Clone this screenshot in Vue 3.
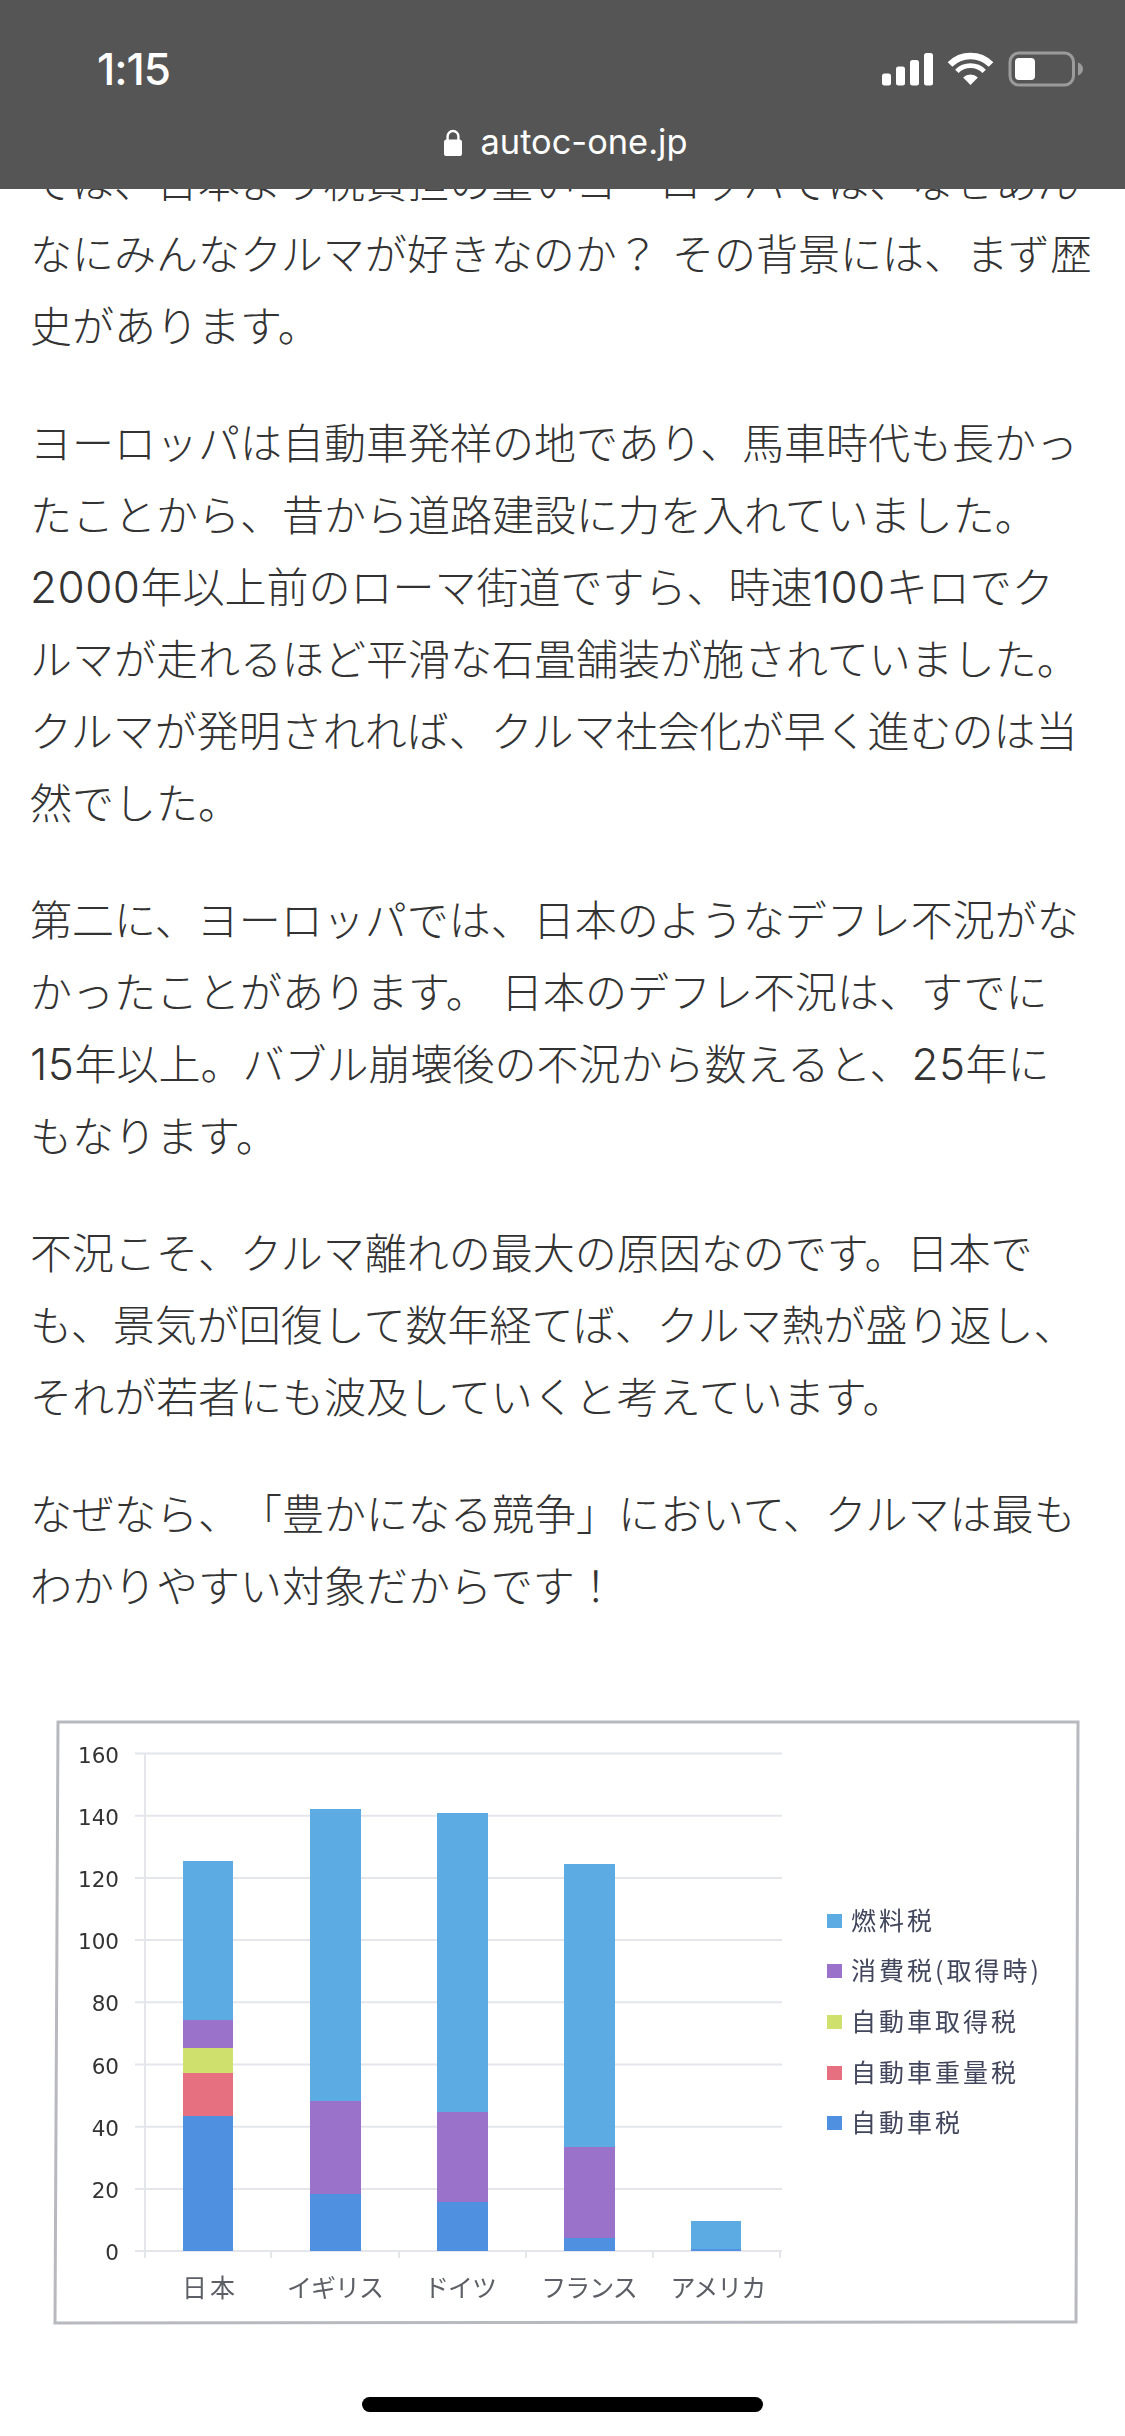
<template>
  <div class="page">
    <!-- Browser chrome, sits over the scrolled article -->
    <header class="chrome">
      <div class="status">
        <span class="time">1:15</span>
        <svg class="status-icons" width="204" height="38" viewBox="880 50 204 38">
          <rect v-for="b in signal" :key="b.x" :x="b.x" :y="b.y" width="9" :height="85.5 - b.y" rx="2.5" fill="#fff" />
          <path d="M950 64.5A29 29 0 0 1 991 64.5" fill="none" stroke="#fff" stroke-width="6.6" />
          <path d="M956.85 71.35A19.3 19.3 0 0 1 984.15 71.35" fill="none" stroke="#fff" stroke-width="4.8" />
          <path d="M970.5 85L963.1 77.6A10.5 10.5 0 0 1 977.9 77.6Z" fill="#fff" />
          <rect x="1010" y="53" width="63.5" height="32" rx="9" fill="none" stroke="#9b9b9b" stroke-width="3" />
          <rect x="1015" y="58" width="20" height="22" rx="4" fill="#fff" />
          <path d="M1078 62.5C1081 63.5 1083 66 1083 69C1083 72 1081 74.5 1078 75.5Z" fill="#9b9b9b" />
        </svg>
      </div>
      <div class="url">
        <svg width="18" height="27" viewBox="0 0 18 27">
          <path d="M3.6 11V7.4a5.4 5.4 0 0 1 10.8 0V11" fill="none" stroke="#fff" stroke-width="2.4" />
          <rect x="0" y="10.5" width="18" height="16.5" rx="2.6" fill="#fff" />
        </svg>
        <span>autoc-one.jp</span>
      </div>
    </header>

    <article class="article">
      <p v-for="(para, i) in paragraphs" :key="i" class="para">
        <span v-for="line in para" :key="line" class="line">
          <template v-for="(part, j) in splitDigits(line)" :key="j">
            <span v-if="j % 2" class="num">{{ part }}</span>
            <template v-else>{{ part }}</template>
          </template>
        </span>
      </p>
    </article>

    <figure class="figure">
      <svg width="1125" height="640" viewBox="0 1700 1125 640">
        <path d="M58 1722L1078 1722L1076 2322L55 2323Z" fill="#fff" stroke="#b8b9bf" stroke-width="3" />
        <g stroke="#e4e6ec" stroke-width="2">
          <line v-for="t in ticks" :key="t.label" x1="135" x2="782" :y1="t.y" :y2="t.y" />
          <line x1="145" x2="145" y1="1753" y2="2258" />
          <line v-for="x in [271, 399, 526, 653, 780]" :key="x" :x1="x" :x2="x" y1="2251" y2="2258" />
        </g>
        <text v-for="t in ticks" :key="'n' + t.label" class="tick" x="119" :y="t.y + 9" text-anchor="end">{{ t.label }}</text>
        <template v-for="bar in bars" :key="bar.name">
          <rect
            v-for="seg in bar.segs"
            :key="seg.top"
            :x="bar.x"
            :y="seg.top"
            :width="bar.w"
            :height="seg.bottom - seg.top"
            :fill="seg.color"
          />
          <text class="cat" :class="{ wide: bar.name === '日本' }" :x="bar.cx" y="2297" text-anchor="middle">{{ bar.name }}</text>
        </template>
        <template v-for="item in legend" :key="item.label">
          <rect x="827" :y="item.y - 7" width="15" height="14" :fill="item.color" />
          <text class="key" x="851" :y="item.y + 9">{{ item.label }}</text>
        </template>
      </svg>
    </figure>

    <div class="home-bar"></div>
  </div>
</template>

<script setup>
const signal = [
  { x: 882, y: 73.5 },
  { x: 896, y: 66.5 },
  { x: 910, y: 60 },
  { x: 924, y: 53 },
];

const paragraphs = [
  [
    "では、日本より税負担の重いヨーロッパでは、なぜあん",
    "なにみんなクルマが好きなのか？ その背景には、まず歴",
    "史があります。",
  ],
  [
    "ヨーロッパは自動車発祥の地であり、馬車時代も長かっ",
    "たことから、昔から道路建設に力を入れていました。",
    "2000年以上前のローマ街道ですら、時速100キロでク",
    "ルマが走れるほど平滑な石畳舗装が施されていました。",
    "クルマが発明されれば、クルマ社会化が早く進むのは当",
    "然でした。",
  ],
  [
    "第二に、ヨーロッパでは、日本のようなデフレ不況がな",
    "かったことがあります。 日本のデフレ不況は、すでに",
    "15年以上。バブル崩壊後の不況から数えると、25年に",
    "もなります。",
  ],
  [
    "不況こそ、クルマ離れの最大の原因なのです。日本で",
    "も、景気が回復して数年経てば、クルマ熱が盛り返し、",
    "それが若者にも波及していくと考えています。",
  ],
  [
    "なぜなら、「豊かになる競争」において、クルマは最も",
    "わかりやすい対象だからです！",
  ],
];

// odd entries are the digit runs
const splitDigits = (line) => line.split(/(\d+)/);

const FUEL = "#5cace3";
const CONS = "#9a72c9";
const ACQ = "#cfe06c";
const WEIGHT = "#e66f80";
const CAR = "#4f90e0";

const ticks = [160, 140, 120, 100, 80, 60, 40, 20, 0].map((label, i) => ({
  label,
  y: 1753.5 + i * 62.2,
}));

const bars = [
  {
    name: "日本", x: 183, w: 50, cx: 210,
    segs: [
      { top: 1861, bottom: 2020, color: FUEL },
      { top: 2020, bottom: 2048, color: CONS },
      { top: 2048, bottom: 2073, color: ACQ },
      { top: 2073, bottom: 2116, color: WEIGHT },
      { top: 2116, bottom: 2251, color: CAR },
    ],
  },
  {
    name: "イギリス", x: 310, w: 51, cx: 335,
    segs: [
      { top: 1809, bottom: 2101, color: FUEL },
      { top: 2101, bottom: 2194, color: CONS },
      { top: 2194, bottom: 2251, color: CAR },
    ],
  },
  {
    name: "ドイツ", x: 437, w: 51, cx: 460,
    segs: [
      { top: 1813, bottom: 2112, color: FUEL },
      { top: 2112, bottom: 2202, color: CONS },
      { top: 2202, bottom: 2251, color: CAR },
    ],
  },
  {
    name: "フランス", x: 564, w: 51, cx: 589,
    segs: [
      { top: 1864, bottom: 2147, color: FUEL },
      { top: 2147, bottom: 2238, color: CONS },
      { top: 2238, bottom: 2251, color: CAR },
    ],
  },
  {
    name: "アメリカ", x: 691, w: 50, cx: 718,
    segs: [
      { top: 2221, bottom: 2249, color: FUEL },
      { top: 2249, bottom: 2251, color: CAR },
    ],
  },
];

const legend = [
  { label: "燃料税", color: FUEL, y: 1921 },
  { label: "消費税(取得時)", color: CONS, y: 1971 },
  { label: "自動車取得税", color: ACQ, y: 2022 },
  { label: "自動車重量税", color: WEIGHT, y: 2073 },
  { label: "自動車税", color: CAR, y: 2123 },
];
</script>

<style scoped>
.page {
  position: relative;
  width: 1125px;
  height: 2436px;
  overflow: hidden;
  background: #fff;
}

.chrome {
  position: absolute;
  top: 0;
  left: 0;
  right: 0;
  height: 189px;
  background: #555;
  color: #fff;
  z-index: 2;
}

.status {
  display: flex;
  justify-content: space-between;
  align-items: center;
  height: 38px;
  padding: 50px 41px 0 97px;
}

.time {
  font-family: Inter, "Liberation Sans", sans-serif;
  font-size: 44px;
  font-weight: 500;
  letter-spacing: -1px;
}

.url {
  display: flex;
  justify-content: center;
  align-items: center;
  gap: 19px;
  margin-top: 34px;
  padding-left: 6px;
  font-family: Inter, "Liberation Sans", sans-serif;
  font-size: 34.4px;
  line-height: 40px;
}

.article {
  padding: 144px 30px 0 30px;
  color: #333;
  font-family: "Noto Sans CJK JP", sans-serif;
  font-size: 42px;
  font-weight: 300;
  line-height: 72px;
  word-spacing: 4px;
  text-spacing-trim: space-all;
}

.para {
  margin: 0 0 45px;
}

.line {
  display: block;
  white-space: nowrap;
}

.num {
  font-family: Inter, sans-serif;
  font-size: 44px;
  font-weight: 300;
  line-height: 1;
  letter-spacing: 0.5px;
}

.figure {
  margin: 80px 0 0;
}

.figure svg {
  display: block;
  filter: blur(0.6px);
}

.tick {
  font-family: "DejaVu Sans", sans-serif;
  font-size: 21.5px;
  fill: #333;
}

.cat {
  font-family: "Noto Sans CJK JP", sans-serif;
  font-size: 25px;
  letter-spacing: -1px;
  fill: #5c5f66;
}

.cat.wide {
  letter-spacing: 3px;
}

.key {
  font-family: "Noto Sans CJK JP", sans-serif;
  font-size: 25px;
  letter-spacing: 3px;
  fill: #41465c;
}

.home-bar {
  position: absolute;
  left: 362px;
  top: 2397px;
  width: 401px;
  height: 15px;
  border-radius: 8px;
  background: #000;
}
</style>
